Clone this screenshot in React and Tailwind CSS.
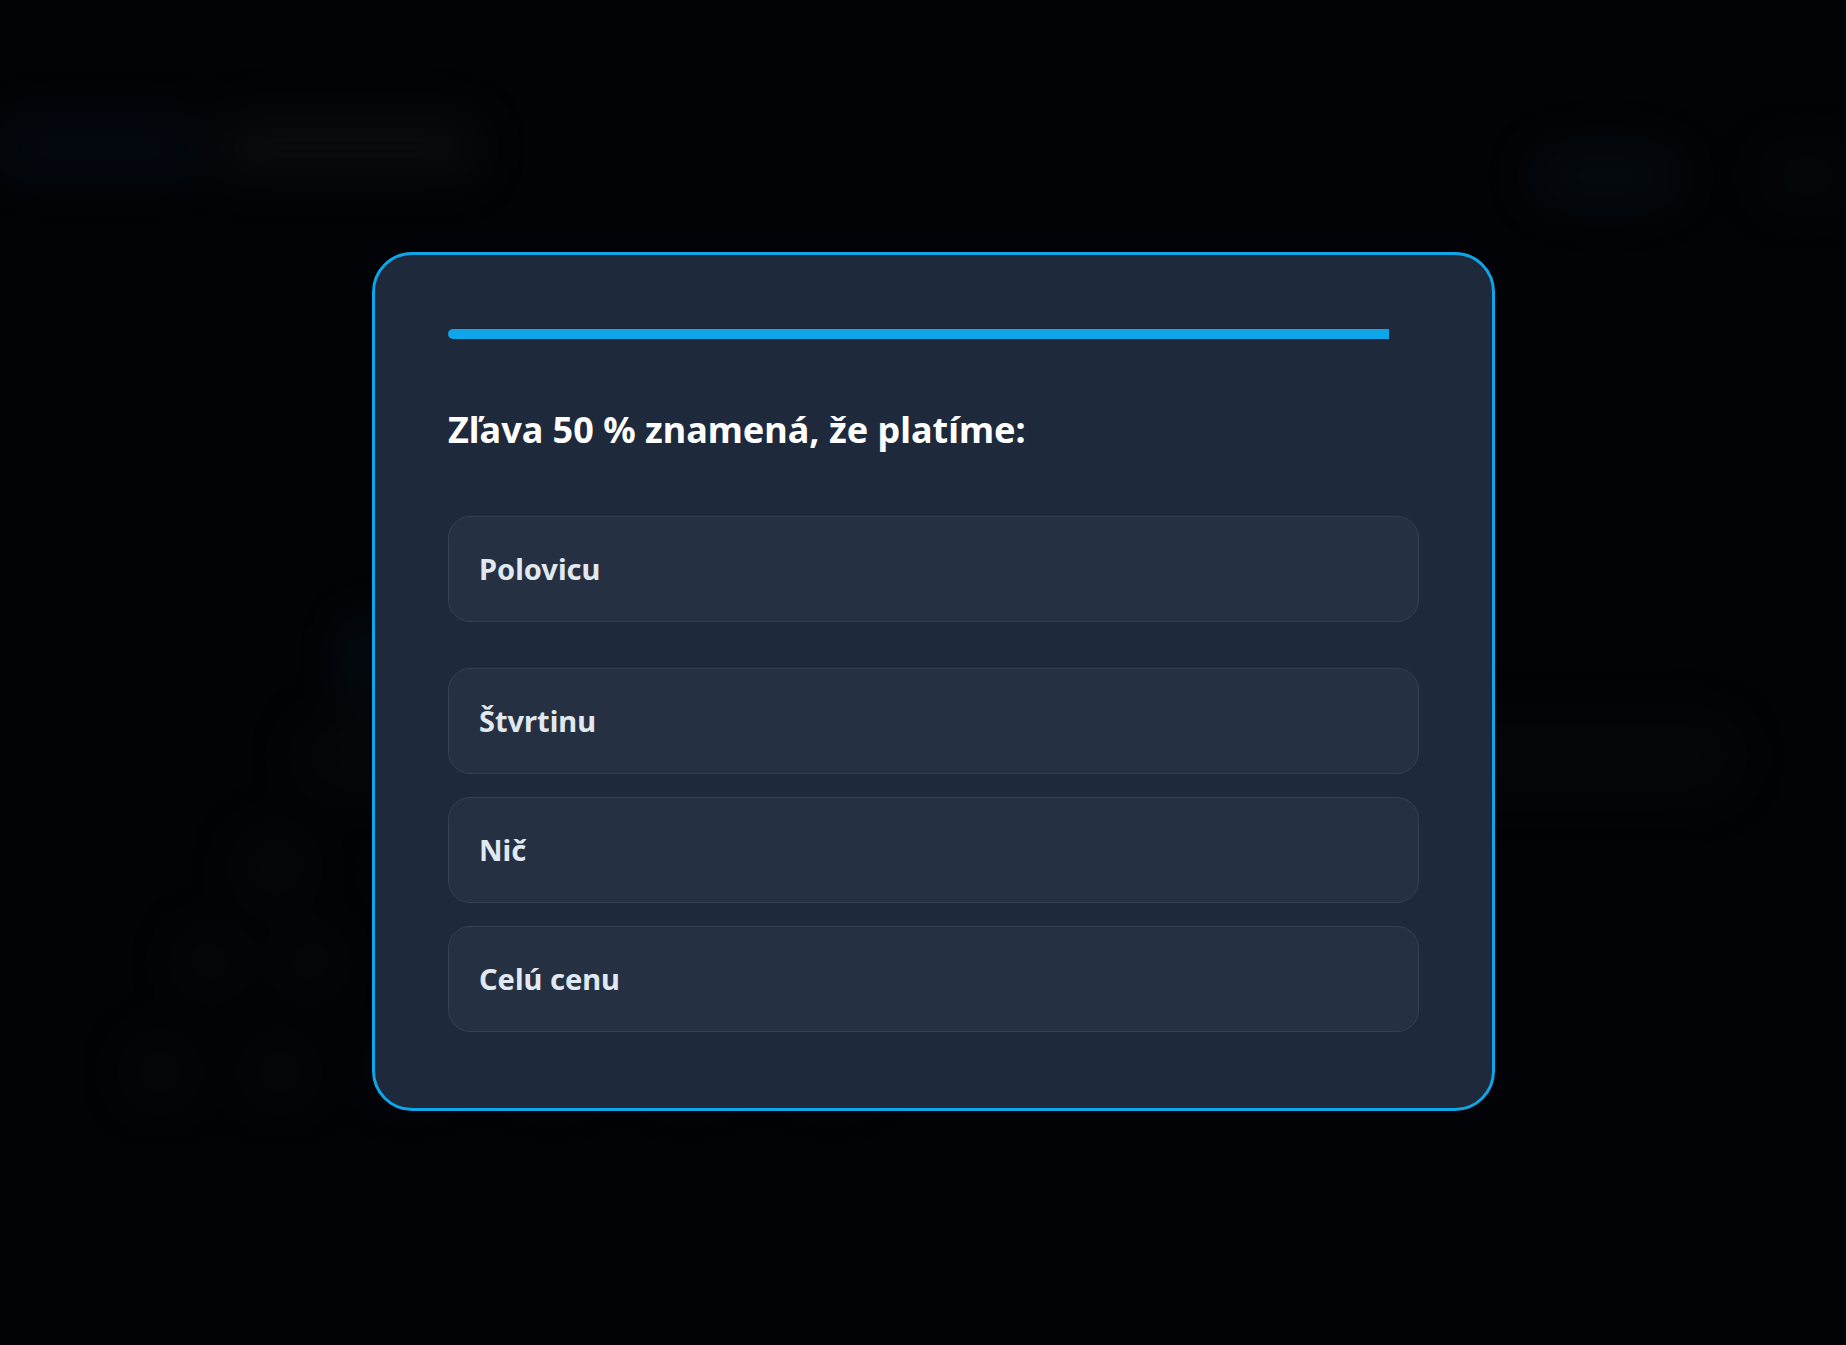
import React from 'react';

const moznosti = ['Polovicu', 'Štvrtinu', 'Nič', 'Celú cenu'];

// rozmazaná stránka v pozadí (za modálnym oknom)
function Pozadie() {
  return (
    <div className="flex flex-col blur-xl opacity-50">
      <div className="flex items-start justify-between pt-[122px]">
        <div className="flex items-center gap-6">
          <div className="h-[46px] w-[200px] rounded-xl bg-[#06121c]" />
          <div className="h-[50px] w-[250px] rounded-lg bg-[#161719]" />
        </div>
        <div className="flex items-center gap-[90px] pt-[28px]">
          <div className="h-[44px] w-[140px] rounded-full bg-[#07161c]" />
          <div className="h-[52px] w-[80px] rounded-l-full bg-[#0c0b0a]" />
        </div>
      </div>
      <div className="flex pl-[352px] pt-[420px]">
        <div className="h-[80px] w-[30px] rounded-full bg-[#06202a]" />
      </div>
      <div className="flex pl-[300px] pr-[110px] pt-[20px]">
        <div className="h-[70px] w-full rounded-full bg-[#0a0b0d]" />
      </div>
      <div className="flex gap-10 pl-[240px] pt-[40px]">
        <div className="h-[70px] w-[70px] rounded-full bg-[#0b0c0e]" />
      </div>
      <div className="flex gap-10 pl-[180px] pt-[30px]">
        <div className="h-[60px] w-[60px] rounded-full bg-[#0b0c0e]" />
        <div className="h-[60px] w-[60px] rounded-full bg-[#0b0c0e]" />
      </div>
      <div className="flex gap-[60px] pl-[130px] pt-[50px]">
        <div className="h-[60px] w-[60px] rounded-full bg-[#0c0d0f]" />
        <div className="h-[60px] w-[60px] rounded-full bg-[#0c0d0f]" />
        <div className="h-[50px] w-[80px] rounded-full bg-[#0a0b0d]" />
        <div className="h-[50px] w-[80px] rounded-full bg-[#0a0b0d]" />
        <div className="h-[50px] w-[80px] rounded-full bg-[#0a0b0d]" />
        <div className="h-[50px] w-[80px] rounded-full bg-[#0a0b0d]" />
      </div>
    </div>
  );
}

export default function App() {
  return (
    <div className="relative min-h-screen w-full overflow-hidden bg-[#020307] font-['Noto_Sans',sans-serif]">
      <Pozadie />

      <div className="absolute inset-0 pl-[372px] pt-[252px]">
        <div className="h-[859px] w-[1123px] rounded-[40px] border-[3px] border-[#0ea5e9] bg-[#1e293b] px-[73px] pt-[74px]">
          <div className="h-[10px] w-[941px] rounded-l-full bg-[#0ea5e9]" />

          <h2 className="mt-[71px] text-[36px] font-bold leading-[40px] text-white">
            Zľava 50 % znamená, že platíme:
          </h2>

          <div className="mt-[66px] flex flex-col">
            {moznosti.map((m, i) => (
              <button
                key={m}
                className={
                  i === 0
                    ? 'mb-[46px] flex h-[106px] items-center rounded-[22px] border border-[#344155] bg-[#253142] px-[30px] text-left text-[29px] font-bold text-[#e2e8f0]'
                    : 'mb-[23px] flex h-[106px] items-center rounded-[22px] border border-[#344155] bg-[#253142] px-[30px] text-left text-[29px] font-bold text-[#e2e8f0]'
                }
              >
                {m}
              </button>
            ))}
          </div>
        </div>
      </div>
    </div>
  );
}
